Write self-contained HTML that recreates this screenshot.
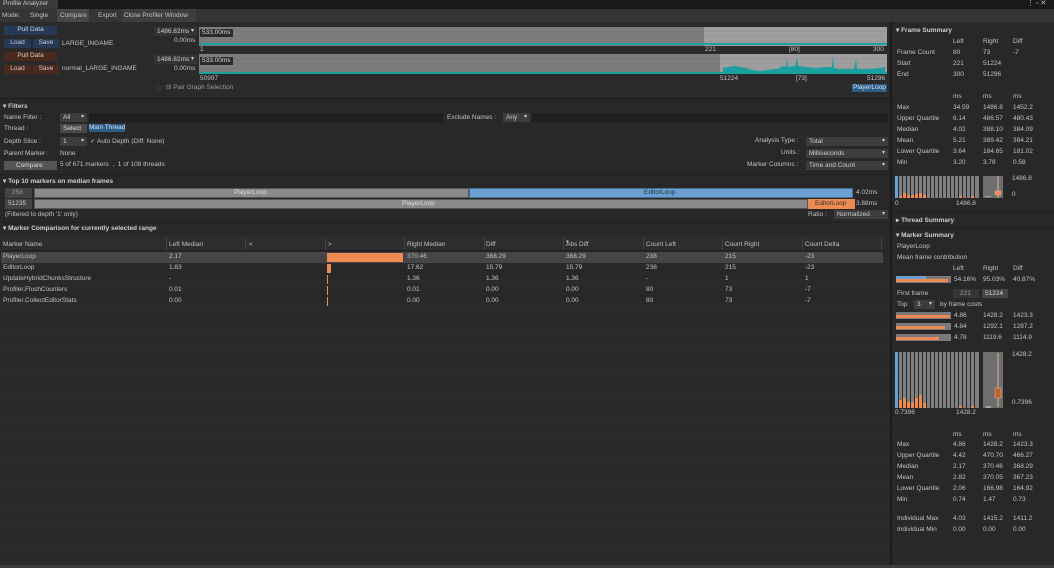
<!DOCTYPE html>
<html><head><meta charset="utf-8"><style>
*{margin:0;padding:0;box-sizing:border-box}
body{width:1054px;height:568px;background:#282828;font-family:"Liberation Sans",sans-serif;font-size:6.5px;color:#c2c2c2;position:relative;overflow:hidden}
.a{position:absolute;white-space:nowrap;line-height:8px}
.b{position:absolute}
.btnB{position:absolute;background:#263a55;color:#c8d0da;text-align:center;line-height:8px}
.btnR{position:absolute;background:#4a2a1f;color:#d8c8c0;text-align:center;line-height:8px}
.dd{position:absolute;background:#3d3d3d;color:#cfcfcf;line-height:9px;padding-left:3px}
.dd:after{content:"▾";position:absolute;right:3px;top:0;font-size:6px}
.hd{font-weight:bold;color:#cfcfcf}
</style></head><body>
<div class="b" style="left:0;top:0;width:1054px;height:9px;background:#191919"></div>
<div class="b" style="left:0;top:0;width:58px;height:9px;background:#3a3a3a"></div>
<div class="a" style="left:3px;top:0px;color:#c8c8c8">Profile Analyzer</div>
<div class="a" style="left:1027px;top:0px;font-size:7px">⋮ ▫ ✕</div>
<div class="b" style="left:0;top:9px;width:1054px;height:13px;background:#353535"></div>
<div class="b" style="left:57px;top:9px;width:32px;height:13px;background:#474747"></div>
<div class="b" style="left:122px;top:9px;width:74px;height:13px;background:#3e3e3e"></div>
<div class="a" style="left:2px;top:12px">Mode:</div>
<div class="a" style="left:30px;top:12px">Single</div>
<div class="a" style="left:60px;top:12px">Compare</div>
<div class="a" style="left:98px;top:12px">Export</div>
<div class="a" style="left:124px;top:12px">Close Profiler Window</div>
<div class="b" style="left:0;top:22px;width:891px;height:76px;background:#2a2a2a"></div>
<div class="btnB" style="left:4px;top:26px;width:53px;height:9px">Pull Data</div>
<div class="btnB" style="left:4px;top:39px;width:27px;height:9px">Load</div>
<div class="btnB" style="left:33px;top:39px;width:26px;height:9px">Save</div>
<div class="a" style="left:62px;top:40px">LARGE_INGAME</div>
<div class="btnR" style="left:4px;top:52px;width:53px;height:9px">Pull Data</div>
<div class="btnR" style="left:4px;top:65px;width:27px;height:9px">Load</div>
<div class="btnR" style="left:33px;top:65px;width:26px;height:9px">Save</div>
<div class="a" style="left:62px;top:65px">normal_LARGE_INGAME</div>
<div class="dd" style="left:154px;top:27px;width:43px;height:9px;background:#343434">1486.82ms</div>
<div class="a" style="left:174px;top:37px">0.00ms</div>
<div class="b" style="left:199px;top:27px;width:505px;height:19px;background:repeating-linear-gradient(#7c7c7c 0 4px,#767676 4px 5px)"></div>
<div class="b" style="left:704px;top:27px;width:183px;height:19px;background:repeating-linear-gradient(#9e9e9e 0 4px,#979797 4px 5px)"></div>
<div class="b" style="left:199px;top:43px;width:688px;height:2px;background:#1aa0a0"></div>
<div class="a" style="left:200px;top:29px;background:#2a2a2a;color:#ddd;padding:0 2px;border-radius:1px">533.00ms</div>
<div class="a" style="left:200px;top:46px">1</div>
<div class="a" style="left:705px;top:46px">221</div>
<div class="a" style="left:789px;top:46px">[80]</div>
<div class="a" style="left:873px;top:46px">300</div>
<div class="dd" style="left:154px;top:55px;width:43px;height:9px;background:#343434">1486.82ms</div>
<div class="a" style="left:174px;top:65px">0.00ms</div>
<div class="b" style="left:199px;top:54px;width:521px;height:20px;background:repeating-linear-gradient(#7c7c7c 0 4px,#767676 4px 5px)"></div>
<div class="b" style="left:720px;top:54px;width:167px;height:20px;background:repeating-linear-gradient(#9e9e9e 0 4px,#979797 4px 5px)"></div>
<svg class="b" style="left:720px;top:54px" width="167" height="20" viewBox="0 0 167 20"><path d="M3 20V14L8 13 14 12 20 13 26 14 32 16 40 17 48 16 56 15 60 14 62 12 66 13 67 5 68 13 75 12 77 3 78 12 86 13 96 14 106 13 112 13 113 1 114 14 120 15 134 15 136 5 137 15 150 15 160 14 165 13 165 20Z" fill="#1aa0a0"/></svg>
<div class="b" style="left:199px;top:72px;width:688px;height:2px;background:#1aa0a0"></div>
<div class="a" style="left:200px;top:57px;background:#2a2a2a;color:#ddd;padding:0 2px">533.00ms</div>
<div class="a" style="left:200px;top:75px">50997</div>
<div class="a" style="left:720px;top:75px">51224</div>
<div class="a" style="left:796px;top:75px">[73]</div>
<div class="a" style="left:867px;top:75px">51296</div>
<div class="b" style="left:155px;top:85px;width:7px;height:7px;background:#2f2f2f"></div>
<div class="a" style="left:166px;top:84px;color:#999">⊟ Pair Graph Selection</div>
<div class="a" style="left:852px;top:84px;background:#2c5d87;color:#d8e4f0;padding:0 1px">PlayerLoop</div>
<div class="b" style="left:0;top:98px;width:891px;height:1px;background:#1c1c1c"></div>
<div class="a hd" style="left:3px;top:103px">▾ Filters</div>
<div class="a" style="left:4px;top:114px">Name Filter :</div>
<div class="dd" style="left:60px;top:113px;width:27px;height:9px">All</div>
<div class="b" style="left:89px;top:113px;width:354px;height:9px;background:#1f1f1f"></div>
<div class="a" style="left:447px;top:114px">Exclude Names :</div>
<div class="dd" style="left:503px;top:113px;width:27px;height:9px">Any</div>
<div class="b" style="left:532px;top:113px;width:356px;height:9px;background:#1f1f1f"></div>
<div class="a" style="left:4px;top:125px">Thread :</div>
<div class="b" style="left:60px;top:124px;width:27px;height:9px;background:#4a4a4a"></div>
<div class="a" style="left:63px;top:125px;color:#ddd">Select</div>
<div class="a" style="left:89px;top:124px;background:#2c5d87;color:#d8e4f0">Main Thread</div>
<div class="a" style="left:4px;top:138px">Depth Slice :</div>
<div class="dd" style="left:60px;top:137px;width:27px;height:9px">1</div>
<div class="a" style="left:90px;top:138px">✓ Auto Depth (Diff: None)</div>
<div class="a" style="left:4px;top:150px">Parent Marker :</div>
<div class="a" style="left:60px;top:150px">None</div>
<div class="b" style="left:4px;top:161px;width:53px;height:9px;background:#555"></div>
<div class="a" style="left:16px;top:162px;color:#ddd">Compare</div>
<div class="a" style="left:60px;top:161px">5 of 671 markers &nbsp;, &nbsp;1 of 108 threads</div>
<div class="a" style="left:755px;top:137px">Analysis Type :</div>
<div class="dd" style="left:806px;top:137px;width:82px;height:9px">Total</div>
<div class="a" style="left:781px;top:149px">Units :</div>
<div class="dd" style="left:806px;top:149px;width:82px;height:9px">Milliseconds</div>
<div class="a" style="left:747px;top:161px">Marker Columns :</div>
<div class="dd" style="left:806px;top:161px;width:82px;height:9px">Time and Count</div>
<div class="b" style="left:0;top:174px;width:891px;height:1px;background:#1f1f1f"></div>
<div class="a hd" style="left:3px;top:178px">▾ Top 10 markers on median frames</div>
<div class="b" style="left:5px;top:188px;width:27px;height:10px;background:#444"></div>
<div class="a" style="left:12px;top:189px;color:#999">258</div>
<div class="b" style="left:34px;top:188px;width:435px;height:10px;background:#8a8a8a;border:1px solid #555"></div>
<div class="a" style="left:234px;top:189px;color:#ddd">PlayerLoop</div>
<div class="b" style="left:469px;top:188px;width:384px;height:10px;background:#6a9fd4;border:1px solid #4a6f90"></div>
<div class="a" style="left:644px;top:189px;color:#233">EditorLoop</div>
<div class="a" style="left:856px;top:189px">4.02ms</div>
<div class="b" style="left:5px;top:199px;width:27px;height:10px;background:#444"></div>
<div class="a" style="left:8px;top:200px;color:#ccc">51235</div>
<div class="b" style="left:34px;top:199px;width:774px;height:10px;background:#8a8a8a;border:1px solid #555"></div>
<div class="a" style="left:402px;top:200px;color:#ddd">PlayerLoop</div>
<div class="b" style="left:808px;top:199px;width:47px;height:10px;background:#ee8a52"></div>
<div class="a" style="left:815px;top:200px;color:#333">EditorLoop</div>
<div class="a" style="left:856px;top:200px">3.88ms</div>
<div class="a" style="left:5px;top:211px">(Filtered to depth '1' only)</div>
<div class="a" style="left:808px;top:211px">Ratio :</div>
<div class="dd" style="left:834px;top:210px;width:54px;height:9px">Normalized</div>
<div class="b" style="left:0;top:222px;width:891px;height:1px;background:#1f1f1f"></div>
<div class="a hd" style="left:3px;top:225px">▾ Marker Comparison for currently selected range</div>
<div class="b" style="left:0;top:235px;width:891px;height:333px;background:repeating-linear-gradient(#2a2a2a 0 11px,#282828 11px 22px)"></div>
<div class="b" style="left:1px;top:236px;width:882px;height:15px;background:#2d2d2d;border-bottom:1px solid #1e1e1e"></div>
<div class="b" style="left:1px;top:252px;width:882px;height:11px;background:#454545"></div>
<div class="a" style="left:3px;top:241px">Marker Name</div>
<div class="a" style="left:169px;top:241px">Left Median</div>
<div class="a" style="left:249px;top:241px">&lt;</div>
<div class="a" style="left:328px;top:241px">&gt;</div>
<div class="a" style="left:407px;top:241px">Right Median</div>
<div class="a" style="left:486px;top:241px">Diff</div>
<div class="a" style="left:566px;top:238px;font-size:5px">▾</div>
<div class="a" style="left:566px;top:241px">Abs Diff</div>
<div class="a" style="left:646px;top:241px">Count Left</div>
<div class="a" style="left:725px;top:241px">Count Right</div>
<div class="a" style="left:805px;top:241px">Count Delta</div>
<div class="b" style="left:166px;top:238px;width:1px;height:12px;background:#444"></div>
<div class="b" style="left:245px;top:238px;width:1px;height:12px;background:#444"></div>
<div class="b" style="left:325px;top:238px;width:1px;height:12px;background:#444"></div>
<div class="b" style="left:404px;top:238px;width:1px;height:12px;background:#444"></div>
<div class="b" style="left:484px;top:238px;width:1px;height:12px;background:#444"></div>
<div class="b" style="left:563px;top:238px;width:1px;height:12px;background:#444"></div>
<div class="b" style="left:643px;top:238px;width:1px;height:12px;background:#444"></div>
<div class="b" style="left:722px;top:238px;width:1px;height:12px;background:#444"></div>
<div class="b" style="left:802px;top:238px;width:1px;height:12px;background:#444"></div>
<div class="b" style="left:881px;top:238px;width:1px;height:12px;background:#444"></div>
<div class="b" style="left:327px;top:253px;width:76px;height:9px;background:#ee8a52"></div>
<div class="b" style="left:327px;top:264px;width:4px;height:9px;background:#ee8a52"></div>
<div class="b" style="left:327px;top:275px;width:1px;height:9px;background:#ee8a52"></div>
<div class="b" style="left:327px;top:286px;width:1px;height:9px;background:#ee8a52"></div>
<div class="b" style="left:327px;top:297px;width:1px;height:9px;background:#ee8a52"></div>
<div class="a" style="left:3px;top:253px">PlayerLoop</div><div class="a" style="left:169px;top:253px">2.17</div><div class="a" style="left:407px;top:253px">370.46</div><div class="a" style="left:486px;top:253px">368.29</div><div class="a" style="left:566px;top:253px">368.29</div><div class="a" style="left:646px;top:253px">238</div><div class="a" style="left:725px;top:253px">215</div><div class="a" style="left:805px;top:253px">-23</div>
<div class="a" style="left:3px;top:264px">EditorLoop</div><div class="a" style="left:169px;top:264px">1.83</div><div class="a" style="left:407px;top:264px">17.62</div><div class="a" style="left:486px;top:264px">15.79</div><div class="a" style="left:566px;top:264px">15.79</div><div class="a" style="left:646px;top:264px">238</div><div class="a" style="left:725px;top:264px">215</div><div class="a" style="left:805px;top:264px">-23</div>
<div class="a" style="left:3px;top:275px">UpdateHybridChunksStructure</div><div class="a" style="left:169px;top:275px">-</div><div class="a" style="left:407px;top:275px">1.36</div><div class="a" style="left:486px;top:275px">1.36</div><div class="a" style="left:566px;top:275px">1.36</div><div class="a" style="left:646px;top:275px">-</div><div class="a" style="left:725px;top:275px">1</div><div class="a" style="left:805px;top:275px">1</div>
<div class="a" style="left:3px;top:286px">Profiler.FlushCounters</div><div class="a" style="left:169px;top:286px">0.01</div><div class="a" style="left:407px;top:286px">0.01</div><div class="a" style="left:486px;top:286px">0.00</div><div class="a" style="left:566px;top:286px">0.00</div><div class="a" style="left:646px;top:286px">80</div><div class="a" style="left:725px;top:286px">73</div><div class="a" style="left:805px;top:286px">-7</div>
<div class="a" style="left:3px;top:297px">Profiler.CollectEditorStats</div><div class="a" style="left:169px;top:297px">0.00</div><div class="a" style="left:407px;top:297px">0.00</div><div class="a" style="left:486px;top:297px">0.00</div><div class="a" style="left:566px;top:297px">0.00</div><div class="a" style="left:646px;top:297px">80</div><div class="a" style="left:725px;top:297px">73</div><div class="a" style="left:805px;top:297px">-7</div>
<div class="b" style="left:890px;top:22px;width:2px;height:546px;background:#1c1c1c"></div>
<div class="b" style="left:892px;top:22px;width:162px;height:546px;background:#282828"></div>
<div class="a hd" style="left:896px;top:27px">▾ Frame Summary</div>
<div class="a" style="left:953px;top:38px">Left</div><div class="a" style="left:983px;top:38px">Right</div><div class="a" style="left:1013px;top:38px">Diff</div>
<div class="a" style="left:897px;top:49px">Frame Count</div><div class="a" style="left:953px;top:49px">80</div><div class="a" style="left:983px;top:49px">73</div><div class="a" style="left:1013px;top:49px">-7</div>
<div class="a" style="left:897px;top:60px">Start</div><div class="a" style="left:953px;top:60px">221</div><div class="a" style="left:983px;top:60px">51224</div>
<div class="a" style="left:897px;top:71px">End</div><div class="a" style="left:953px;top:71px">300</div><div class="a" style="left:983px;top:71px">51296</div>
<div class="a" style="left:953px;top:93px">ms</div><div class="a" style="left:983px;top:93px">ms</div><div class="a" style="left:1013px;top:93px">ms</div>
<div class="a" style="left:897px;top:104px">Max</div><div class="a" style="left:953px;top:104px">34.59</div><div class="a" style="left:983px;top:104px">1486.8</div><div class="a" style="left:1013px;top:104px">1452.2</div>
<div class="a" style="left:897px;top:115px">Upper Quartile</div><div class="a" style="left:953px;top:115px">6.14</div><div class="a" style="left:983px;top:115px">486.57</div><div class="a" style="left:1013px;top:115px">480.43</div>
<div class="a" style="left:897px;top:126px">Median</div><div class="a" style="left:953px;top:126px">4.02</div><div class="a" style="left:983px;top:126px">388.10</div><div class="a" style="left:1013px;top:126px">384.09</div>
<div class="a" style="left:897px;top:137px">Mean</div><div class="a" style="left:953px;top:137px">5.21</div><div class="a" style="left:983px;top:137px">389.42</div><div class="a" style="left:1013px;top:137px">384.21</div>
<div class="a" style="left:897px;top:148px">Lower Quartile</div><div class="a" style="left:953px;top:148px">3.64</div><div class="a" style="left:983px;top:148px">184.65</div><div class="a" style="left:1013px;top:148px">181.02</div>
<div class="a" style="left:897px;top:159px">Min</div><div class="a" style="left:953px;top:159px">3.20</div><div class="a" style="left:983px;top:159px">3.78</div><div class="a" style="left:1013px;top:159px">0.58</div>
<svg class="b" style="left:895px;top:176px" width="110" height="24" viewBox="0 0 110 24">
<rect x="0" y="0" width="84" height="22" fill="#808080"/>
<g fill="#2a2a2a"><rect x="3" y="0" width="1" height="22"/><rect x="7" y="0" width="1" height="22"/><rect x="11" y="0" width="1" height="22"/><rect x="15" y="0" width="1" height="22"/><rect x="19" y="0" width="1" height="22"/><rect x="23" y="0" width="1" height="22"/><rect x="27" y="0" width="1" height="22"/><rect x="31" y="0" width="1" height="22"/><rect x="35" y="0" width="1" height="22"/><rect x="39" y="0" width="1" height="22"/><rect x="43" y="0" width="1" height="22"/><rect x="47" y="0" width="1" height="22"/><rect x="51" y="0" width="1" height="22"/><rect x="55" y="0" width="1" height="22"/><rect x="59" y="0" width="1" height="22"/><rect x="63" y="0" width="1" height="22"/><rect x="67" y="0" width="1" height="22"/><rect x="71" y="0" width="1" height="22"/><rect x="75" y="0" width="1" height="22"/><rect x="79" y="0" width="1" height="22"/></g>
<rect x="0" y="0" width="3" height="22" fill="#6a9fd4"/>
<g fill="#ee8a52"><rect x="4" y="20" width="3" height="2"/><rect x="8" y="17" width="3" height="5"/><rect x="12" y="19" width="3" height="3"/><rect x="16" y="19" width="3" height="3"/><rect x="20" y="18" width="3" height="4"/><rect x="24" y="17" width="3" height="5"/><rect x="28" y="19" width="3" height="3"/><rect x="64" y="20" width="3" height="2"/><rect x="76" y="20" width="3" height="2"/></g>
<rect x="88" y="0" width="20" height="22" fill="#6e6e6e"/><line x1="103" y1="0" x2="103" y2="22" stroke="#e0b090" stroke-width="1"/><rect x="100" y="15" width="6" height="4" fill="#ee8a52" stroke="#e0b090" stroke-width=".5"/><rect x="90" y="20" width="6" height="1" fill="#9ab"/>
</svg>
<div class="a" style="left:1012px;top:175px">1486.8</div>
<div class="a" style="left:1012px;top:191px">0</div>
<div class="a" style="left:895px;top:200px">0</div>
<div class="a" style="left:956px;top:200px">1486.8</div>
<div class="b" style="left:892px;top:212px;width:162px;height:1px;background:#1f1f1f"></div>
<div class="a hd" style="left:896px;top:217px">▸ Thread Summary</div>
<div class="b" style="left:892px;top:228px;width:162px;height:1px;background:#1f1f1f"></div>
<div class="a hd" style="left:896px;top:232px">▾ Marker Summary</div>
<div class="a" style="left:897px;top:243px">PlayerLoop</div>
<div class="a" style="left:897px;top:254px">Mean frame contribution</div>
<div class="a" style="left:953px;top:265px">Left</div><div class="a" style="left:983px;top:265px">Right</div><div class="a" style="left:1013px;top:265px">Diff</div>
<div class="b" style="left:896px;top:276px;width:55px;height:7px;background:#7a7a7a"></div>
<div class="b" style="left:896px;top:276px;width:30px;height:3px;background:#6a9fd4"></div>
<div class="b" style="left:896px;top:279px;width:52px;height:3px;background:#ee8a52"></div>
<div class="a" style="left:954px;top:276px">54.16%</div><div class="a" style="left:983px;top:276px">95.03%</div><div class="a" style="left:1013px;top:276px">40.87%</div>
<div class="a" style="left:897px;top:290px">First frame</div>
<div class="b" style="left:953px;top:289px;width:26px;height:9px;background:#353535"></div><div class="a" style="left:960px;top:290px;color:#999">221</div>
<div class="b" style="left:982px;top:289px;width:26px;height:9px;background:#444"></div><div class="a" style="left:985px;top:290px;color:#ddd">51224</div>
<div class="a" style="left:897px;top:301px">Top</div>
<div class="dd" style="left:914px;top:300px;width:21px;height:9px">3</div>
<div class="a" style="left:940px;top:301px">by frame costs</div>
<div class="b" style="left:896px;top:312px;width:55px;height:7px;background:#7a7a7a"></div><div class="b" style="left:896px;top:315px;width:54px;height:3px;background:#ee8a52"></div>
<div class="b" style="left:896px;top:323px;width:55px;height:7px;background:#7a7a7a"></div><div class="b" style="left:896px;top:326px;width:49px;height:3px;background:#ee8a52"></div>
<div class="b" style="left:896px;top:334px;width:55px;height:7px;background:#7a7a7a"></div><div class="b" style="left:896px;top:337px;width:43px;height:3px;background:#ee8a52"></div>
<div class="a" style="left:954px;top:312px">4.86</div><div class="a" style="left:983px;top:312px">1428.2</div><div class="a" style="left:1013px;top:312px">1423.3</div>
<div class="a" style="left:954px;top:323px">4.84</div><div class="a" style="left:983px;top:323px">1292.1</div><div class="a" style="left:1013px;top:323px">1287.2</div>
<div class="a" style="left:954px;top:334px">4.78</div><div class="a" style="left:983px;top:334px">1119.6</div><div class="a" style="left:1013px;top:334px">1114.9</div>
<svg class="b" style="left:895px;top:352px" width="110" height="56" viewBox="0 0 110 56">
<rect x="0" y="0" width="84" height="56" fill="#808080"/>
<g fill="#2a2a2a"><rect x="3" y="0" width="1" height="56"/><rect x="7" y="0" width="1" height="56"/><rect x="11" y="0" width="1" height="56"/><rect x="15" y="0" width="1" height="56"/><rect x="19" y="0" width="1" height="56"/><rect x="23" y="0" width="1" height="56"/><rect x="27" y="0" width="1" height="56"/><rect x="31" y="0" width="1" height="56"/><rect x="35" y="0" width="1" height="56"/><rect x="39" y="0" width="1" height="56"/><rect x="43" y="0" width="1" height="56"/><rect x="47" y="0" width="1" height="56"/><rect x="51" y="0" width="1" height="56"/><rect x="55" y="0" width="1" height="56"/><rect x="59" y="0" width="1" height="56"/><rect x="63" y="0" width="1" height="56"/><rect x="67" y="0" width="1" height="56"/><rect x="71" y="0" width="1" height="56"/><rect x="75" y="0" width="1" height="56"/><rect x="79" y="0" width="1" height="56"/></g>
<rect x="0" y="0" width="3" height="56" fill="#6a9fd4"/>
<g fill="#ee8a52"><rect x="4" y="48" width="3" height="8"/><rect x="8" y="46" width="3" height="10"/><rect x="12" y="50" width="3" height="6"/><rect x="16" y="50" width="3" height="6"/><rect x="20" y="46" width="3" height="10"/><rect x="24" y="43" width="3" height="13"/><rect x="28" y="51" width="3" height="5"/><rect x="64" y="54" width="3" height="2"/><rect x="76" y="54" width="3" height="2"/></g>
<rect x="88" y="0" width="20" height="56" fill="#6e6e6e"/><line x1="103" y1="1" x2="103" y2="55" stroke="#e0b090"/><rect x="100" y="36" width="6" height="10" fill="#c0602a" stroke="#e0b090" stroke-width=".6"/><rect x="91" y="54" width="5" height="2" fill="#9ab"/>
</svg>
<div class="a" style="left:1012px;top:351px">1428.2</div>
<div class="a" style="left:1012px;top:399px">0.7396</div>
<div class="a" style="left:895px;top:409px">0.7396</div>
<div class="a" style="left:956px;top:409px">1428.2</div>
<div class="a" style="left:953px;top:431px">ms</div><div class="a" style="left:983px;top:431px">ms</div><div class="a" style="left:1013px;top:431px">ms</div>
<div class="a" style="left:897px;top:441px">Max</div><div class="a" style="left:953px;top:441px">4.86</div><div class="a" style="left:983px;top:441px">1428.2</div><div class="a" style="left:1013px;top:441px">1423.3</div>
<div class="a" style="left:897px;top:452px">Upper Quartile</div><div class="a" style="left:953px;top:452px">4.42</div><div class="a" style="left:983px;top:452px">470.70</div><div class="a" style="left:1013px;top:452px">466.27</div>
<div class="a" style="left:897px;top:463px">Median</div><div class="a" style="left:953px;top:463px">2.17</div><div class="a" style="left:983px;top:463px">370.46</div><div class="a" style="left:1013px;top:463px">368.29</div>
<div class="a" style="left:897px;top:474px">Mean</div><div class="a" style="left:953px;top:474px">2.82</div><div class="a" style="left:983px;top:474px">370.05</div><div class="a" style="left:1013px;top:474px">367.23</div>
<div class="a" style="left:897px;top:485px">Lower Quartile</div><div class="a" style="left:953px;top:485px">2.06</div><div class="a" style="left:983px;top:485px">166.98</div><div class="a" style="left:1013px;top:485px">164.92</div>
<div class="a" style="left:897px;top:496px">Min</div><div class="a" style="left:953px;top:496px">0.74</div><div class="a" style="left:983px;top:496px">1.47</div><div class="a" style="left:1013px;top:496px">0.73</div>
<div class="a" style="left:897px;top:515px">Individual Max</div><div class="a" style="left:953px;top:515px">4.03</div><div class="a" style="left:983px;top:515px">1415.2</div><div class="a" style="left:1013px;top:515px">1411.2</div>
<div class="a" style="left:897px;top:526px">Individual Min</div><div class="a" style="left:953px;top:526px">0.00</div><div class="a" style="left:983px;top:526px">0.00</div><div class="a" style="left:1013px;top:526px">0.00</div>
<div class="b" style="left:0;top:565px;width:1054px;height:3px;background:#3a3a3a"></div>
</body></html>
